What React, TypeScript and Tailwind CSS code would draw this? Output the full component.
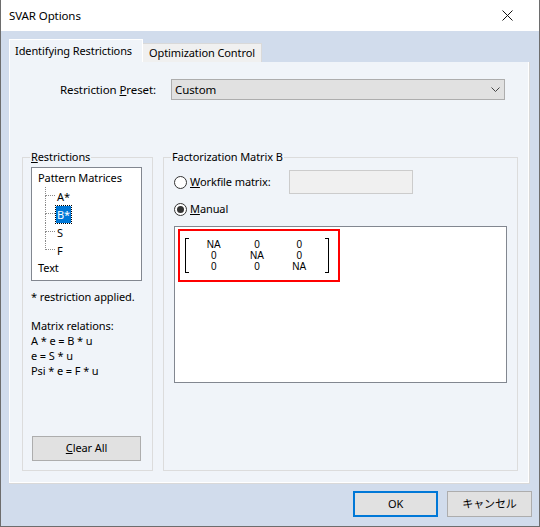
import React from 'react';

const font = { fontFamily: '"Noto Sans", "Noto Sans CJK JP", sans-serif' };

function Radio({ checked }: { checked?: boolean }) {
  return (
    <span className="w-[13px] h-[13px] rounded-full border border-[#333] bg-white flex items-center justify-center shrink-0">
      {checked && <span className="w-[7px] h-[7px] rounded-full bg-[#333]" />}
    </span>
  );
}

function TreeChild({ label, last, selected }: { label: string; last?: boolean; selected?: boolean }) {
  return (
    <div className="flex h-[18px]">
      <div className="w-[10px] flex flex-col">
        <div className="h-[9px] border-l border-b border-dotted border-[#8a8a8a]" />
        <div className={last ? 'flex-1' : 'flex-1 border-l border-dotted border-[#8a8a8a]'} />
      </div>
      <div className="pl-[1px] flex items-center">
        <span
          className={
            selected
              ? 'bg-[#0078d7] text-white px-[1px] leading-[17px] outline outline-1 outline-dotted outline-[#000]'
              : 'px-[1px] leading-[17px]'
          }
        >
          {label}
        </span>
      </div>
    </div>
  );
}

export default function App() {
  return (
    <div
      className="w-[540px] h-[527px] flex flex-col border-x border-b border-[#6d6d6d] text-[11px] tracking-[-0.1px] text-black overflow-hidden whitespace-nowrap"
      style={font}
    >
      {/* title bar */}
      <div className="h-[31px] bg-white flex items-center justify-between pl-[8px] pr-[26px] shrink-0">
        <span className="text-[11.5px]">SVAR Options</span>
        <svg width="11" height="11" viewBox="0 0 11 11">
          <path d="M0.5 0.5 L10.5 10.5 M10.5 0.5 L0.5 10.5" stroke="#111" strokeWidth="1" />
        </svg>
      </div>

      <div className="flex-1 bg-[#d1dcec] flex flex-col pl-[8px] pr-[8px] pt-[9px]">
        {/* tabs */}
        <div className="flex items-end h-[22px]">
          <div className="h-[23px] w-[134px] bg-[#f0f4f9] border-t border-l border-r border-white pl-[5px] pt-[3px] relative z-10">
            Identifying Restrictions
          </div>
          <div className="h-[19px] w-[119px] bg-[#f0f0f0] border-t border-r border-[#d9d9d9] flex items-center pl-[6px]">
            Optimization Control
          </div>
        </div>

        {/* panel */}
        <div className="h-[422px] w-[521px] border-r border-b border-[#d9d9d9]">
          <div className="h-full w-full bg-[#f0f4f9] border border-white border-t-0 flex flex-col">
            {/* preset row */}
            <div className="flex items-center mt-[17px] h-[21px]">
              <div className="w-[161px] flex justify-end pr-[15px]">
                <span className="text-[11.5px]">
                  Restriction <span className="underline">P</span>reset:
                </span>
              </div>
              <div className="w-[334px] h-[21px] bg-[#e1e1e1] border border-[#adadad] flex items-center justify-between pl-[3px] pr-[4px]">
                <span className="text-[11.5px]">Custom</span>
                <svg width="9" height="5" viewBox="0 0 9 5">
                  <path d="M0.5 0.5 L4.5 4.5 L8.5 0.5" fill="none" stroke="#444" strokeWidth="1" />
                </svg>
              </div>
            </div>

            {/* groups */}
            <div className="flex gap-[10px] pl-[12px] mt-[57px]">
              {/* Restrictions */}
              <fieldset className="w-[131px] h-[322px] border border-[#dcdcdc] px-[8px] pb-[9px] flex flex-col -mt-[8px]">
                <legend className="-ml-[1px] px-[1px] leading-[16px]">
                  <span className="underline">R</span>estrictions
                </legend>
                <div className="h-[114px] w-[111px] bg-white border border-[#828790] pt-[1px] pl-[6px] mt-[2px]">
                  <div className="h-[18px] flex items-center">Pattern Matrices</div>
                  <div className="pl-[7px]">
                    <TreeChild label="A*" />
                    <TreeChild label="B*" selected />
                    <TreeChild label="S" />
                    <TreeChild label="F" last />
                  </div>
                  <div className="h-[18px] flex items-center">Text</div>
                </div>
                <div className="mt-[8px] leading-[15px]">* restriction applied.</div>
                <div className="mt-[14px] leading-[15px]">
                  <div>Matrix relations:</div>
                  <div>A * e = B * u</div>
                  <div>e = S * u</div>
                  <div>Psi * e = F * u</div>
                </div>
                <div className="flex-1" />
                <div className="ml-[1px] w-[109px] h-[25px] bg-[#e1e1e1] border border-[#adadad] flex items-center justify-center">
                  <span>
                    <span className="underline">C</span>lear All
                  </span>
                </div>
              </fieldset>

              {/* Factorization */}
              <fieldset className="w-[355px] h-[322px] border border-[#dcdcdc] pl-[10px] pr-[10px] flex flex-col -mt-[8px]">
                <legend className="-ml-[3px] px-[1px] leading-[16px]">Factorization Matrix B</legend>
                <div className="flex items-center h-[24px] mt-[5px]">
                  <Radio />
                  <span className="ml-[3px] w-[99px]">
                    <span className="underline">W</span>orkfile matrix:
                  </span>
                  <div className="w-[124px] h-[24px] bg-[#f0f0f0] border border-[#cccccc]" />
                </div>
                <div className="flex items-center h-[18px] mt-[6px]">
                  <Radio checked />
                  <span className="ml-[3px]">
                    <span className="underline">M</span>anual
                  </span>
                </div>
                <div className="mt-[8px] w-[333px] h-[157px] bg-white border border-[#828790] pt-[2px] pl-[3px]">
                  <div className="w-[162px] h-[53px] border-2 border-[#ff0000] flex items-center pl-[5px]">
                    <div
                      className="flex items-stretch h-[35px] text-[10px] leading-[11px] tracking-normal"
                      style={{ fontFamily: '"Liberation Sans", Arial, sans-serif' }}
                    >
                      <div className="w-[4px] border-l border-t border-b border-black" />
                      <div className="grid grid-cols-3 w-[136px] content-center">
                        <span className="text-center pl-[4px]">NA</span>
                        <span className="text-center">0</span>
                        <span className="text-center pr-[6px]">0</span>
                        <span className="text-center pl-[4px]">0</span>
                        <span className="text-center">NA</span>
                        <span className="text-center pr-[6px]">0</span>
                        <span className="text-center pl-[4px]">0</span>
                        <span className="text-center">0</span>
                        <span className="text-center pr-[6px]">NA</span>
                      </div>
                      <div className="w-[4px] border-r border-t border-b border-black" />
                    </div>
                  </div>
                </div>
              </fieldset>
            </div>
          </div>
        </div>

        {/* buttons */}
        <div className="flex justify-end gap-[9px] mt-[7px] -mr-[1px]">
          <div className="w-[85px] h-[26px] bg-[#e1e1e1] border-2 border-[#0078d7] flex items-center justify-center">
            OK
          </div>
          <div className="w-[85px] h-[26px] bg-[#e1e1e1] border border-[#adadad] flex items-center justify-center">
            キャンセル
          </div>
        </div>
      </div>
    </div>
  );
}
